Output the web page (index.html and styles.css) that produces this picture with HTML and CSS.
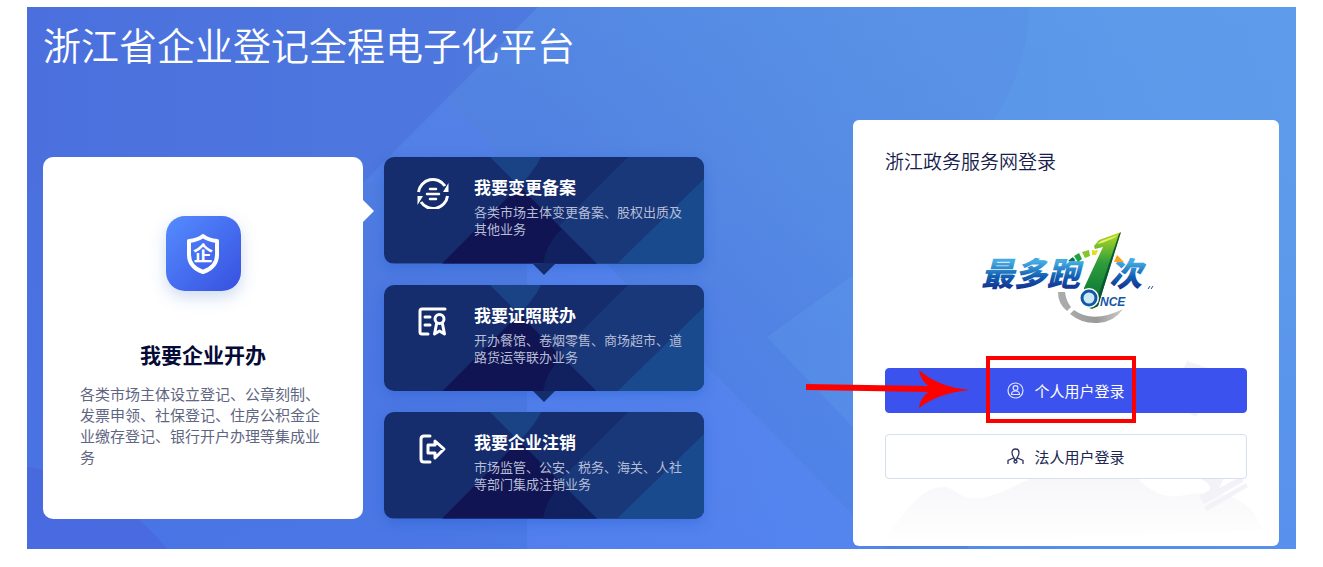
FILE: index.html
```html
<!DOCTYPE html>
<html lang="zh-CN">
<head>
  <meta charset="UTF-8">
  <meta name="viewport" content="width=device-width, initial-scale=1.0">
  <title>浙江省企业登记全程电子化平台</title>
  <link rel="stylesheet" href="styles.css">
</head>
<body>
  <svg class="defs" width="0" height="0" aria-hidden="true">
    <symbol id="card-pattern" viewBox="0 0 320 107" preserveAspectRatio="none">
      <rect width="320" height="107" fill="#152c6d"/>
      <path d="M106 0H157Q150 15 135 29Z" fill="#1a4385"/>
      <path d="M135 29L58 107H213Z" fill="#101452"/>
      <path d="M178 72L213 107H159Q162 87 178 72Z" fill="#11205f"/>
      <path d="M244 0H320V107H213L175 69Z" fill="#18387a"/>
      <path d="M320 22V107H233Z" fill="#1a4a8e"/>
    </symbol>
  </svg>

  <main class="hero">
    <svg class="hero-bg" viewBox="0 0 1269 542" preserveAspectRatio="none" aria-hidden="true">
      <defs>
        <linearGradient id="sky" x1="0" y1="0" x2="1" y2="0">
          <stop offset="0" stop-color="#4b70de"/>
          <stop offset="0.4" stop-color="#4e79de"/>
          <stop offset="0.65" stop-color="#5589e3"/>
          <stop offset="1" stop-color="#5d97e9"/>
        </linearGradient>
        <linearGradient id="depth" x1="0" y1="0" x2="0" y2="1">
          <stop offset="0.3" stop-color="#4678f0" stop-opacity="0"/>
          <stop offset="1" stop-color="#4678f0" stop-opacity="0.4"/>
        </linearGradient>
        <linearGradient id="beam" x1="0" y1="0" x2="0" y2="1">
          <stop offset="0" stop-color="#5c9cea" stop-opacity="0.4"/>
          <stop offset="0.6" stop-color="#5c9cea" stop-opacity="0"/>
        </linearGradient>
      </defs>
      <rect width="1269" height="542" fill="url(#sky)"/>
      <rect width="1269" height="542" fill="url(#depth)"/>
      <path d="M511 0H1269V542H330V182Z" fill="url(#beam)"/>
      <path d="M419 92L500 176H336Z" fill="#5580ee" opacity="0.4"/>
      <path d="M1002 0Q1002 60 965 115Q900 210 826 268L740 330L942 542H1269V0Z" fill="#65a7f0" opacity="0.22"/>
      <path d="M500 176L860 542H500Z" fill="#5c88f6" opacity="0.45"/>
      <path d="M0 460Q80 470 140 542H0Z" fill="#4a60da" opacity="0.45"/>
    </svg>

    <h1 class="hero-title">浙江省企业登记全程电子化平台</h1>

    <div class="hero-content">
      <section class="services">
        <a class="open-card" href="#">
          <span class="open-icon">
            <svg width="36" height="42" viewBox="0 0 36 42" aria-hidden="true">
              <path d="M18 3Q23 7 32 8V22Q32 34 18 39Q4 34 4 22V8Q13 7 18 3Z" fill="none" stroke="#fff" stroke-width="4" stroke-linejoin="round"/>
              <text class="shield-text" x="18" y="28" text-anchor="middle">企</text>
            </svg>
          </span>
          <h2>我要企业开办</h2>
          <p>各类市场主体设立登记、公章刻制、发票申领、社保登记、住房公积金企业缴存登记、银行开户办理等集成业务</p>
        </a>

        <div class="service-list">
          <a class="service" href="#">
            <svg class="service-bg" aria-hidden="true"><use href="#card-pattern"/></svg>
            <svg class="service-icon" viewBox="0 0 34 34" fill="none" stroke="#fff" stroke-width="3" aria-hidden="true">
              <path d="M2.500 17A14.500 14.500 0 0 1 29 11M31.500 21A14.500 14.500 0 0 1 5 27"/>
              <path d="M32.500 8V17H27ZM1.500 30V21H7Z" fill="#fff" stroke="none"/>
              <path d="M14 14H20M11 19H23M14 24H20" stroke-width="2.500" stroke-linecap="round"/>
            </svg>
            <div>
              <h3>我要变更备案</h3>
              <p>各类市场主体变更备案、股权出质及其他业务</p>
            </div>
          </a>
          <a class="service" href="#">
            <svg class="service-bg" aria-hidden="true"><use href="#card-pattern"/></svg>
            <svg class="service-icon" viewBox="0 0 34 34" fill="none" stroke="#fff" stroke-width="3" stroke-linecap="round" aria-hidden="true">
              <path d="M29 6H6Q4 6 4 8V29Q4 31 6 31H12M9 14H14M9 22H14"/>
              <circle cx="23.500" cy="16" r="4.500"/>
              <path d="M20.500 21L18.500 31L23.500 28L28.500 31L26.500 21" stroke-linejoin="round"/>
            </svg>
            <div>
              <h3>我要证照联办</h3>
              <p>开办餐馆、卷烟零售、商场超市、道路货运等联办业务</p>
            </div>
          </a>
          <a class="service" href="#">
            <svg class="service-bg" aria-hidden="true"><use href="#card-pattern"/></svg>
            <svg class="service-icon" viewBox="0 0 34 34" fill="none" stroke="#fff" stroke-width="3" stroke-linecap="round" stroke-linejoin="round" aria-hidden="true">
              <path d="M14 6H8Q5 6 5 9V29Q5 32 8 32H14"/>
              <path d="M12 15H19V11L28 19L19 28V23H12Z"/>
            </svg>
            <div>
              <h3>我要企业注销</h3>
              <p>市场监管、公安、税务、海关、人社等部门集成注销业务</p>
            </div>
          </a>
        </div>
      </section>

      <section class="login">
        <svg class="login-bg" viewBox="0 0 426 426" preserveAspectRatio="none" aria-hidden="true">
          <defs>
            <linearGradient id="hill" x1="0" y1="0" x2="0" y2="1">
              <stop offset="0" stop-color="#f6f6f9"/>
              <stop offset="1" stop-color="#fff"/>
            </linearGradient>
          </defs>
          <path d="M27 425C50 395 66 367 90 367C101 367 106 378 120 378C153 378 167 356 205 352H275C294 364 300 378 326 376C350 372 392 365 410 410Z" fill="url(#hill)"/>
          <g fill="#f3f2f9">
            <path d="M331 248L334 241L355 248V254H330Z"/>
            <path d="M335 292H347L343 296Q339 296 335 292Z"/>
            <path d="M346 358H371L366 368L385 358H390V362L351 384L346 376L357 370Q358 363 346 358Z"/>
            <path d="M351 387L393 363L395 367L354 391Z"/>
          </g>
        </svg>

        <h2>浙江政务服务网登录</h2>

        <svg class="logo" width="210" height="115" viewBox="0 0 210 115" role="img" aria-label="最多跑1次 ONCE">
          <defs>
            <linearGradient id="word" x1="0" y1="42" x2="0" y2="71" gradientUnits="userSpaceOnUse">
              <stop offset="0" stop-color="#45aae2"/>
              <stop offset="0.5" stop-color="#1260b2"/>
              <stop offset="1" stop-color="#14278a"/>
            </linearGradient>
            <linearGradient id="one" x1="0" y1="0" x2="0" y2="1">
              <stop offset="0" stop-color="#b9dc20"/>
              <stop offset="0.4" stop-color="#2f9d3c"/>
              <stop offset="1" stop-color="#006b36"/>
            </linearGradient>
            <linearGradient id="ring" x1="0" y1="0" x2="1" y2="0">
              <stop offset="0" stop-color="#aaa"/>
              <stop offset="0.5" stop-color="#999"/>
              <stop offset="1" stop-color="#ccc"/>
            </linearGradient>
          </defs>
          <path d="M97 72H104Q105 81 110 87L106 91Q97 84 97 72Z" fill="#aaa"/>
          <path d="M113 90Q132 104 162 89Q153 102 137 103Q121 104 109 94Z" fill="url(#ring)"/>
          <text class="logo-word" x="20" y="66" fill="url(#word)">最多跑</text>
          <text class="logo-word" x="148" y="66" fill="url(#word)">次</text>
          <path d="M107 41L112 37L114 41Z" fill="#087541"/>
          <path d="M113 36L118 33L121 39L117 42Z" fill="#1fa23c"/>
          <path d="M121 32L128 30L129 36L124 38Z" fill="#86c62c"/>
          <path d="M131 30H137L135 35H131Z" fill="#e3e020"/>
          <path d="M153 42L156 35L163 42Z" fill="#f7a61b"/>
          <path d="M133 26L138 20L160 12L137 86L131 89L123 86V68L142 27L134 29Z" fill="url(#one)" stroke="#fff" stroke-width="3" paint-order="stroke"/>
          <path d="M158 14L160 12L137 86L133 88Z" fill="#075832"/>
          <path d="M136 24L140 21L157 15L153 18L141 23Z" fill="#e9ef70"/>
          <circle cx="128" cy="78" r="10" fill="#fff"/>
          <circle cx="128" cy="78" r="7" fill="#cbe8f5" stroke="#1457a6" stroke-width="3"/>
          <text class="logo-once" x="139" y="86">NCE</text>
          <path d="M187 69L189 66M190 69L192 66" stroke="#1457a6"/>
        </svg>

        <div class="login-actions">
          <button class="btn btn-primary" type="button">
            <svg width="17" height="17" viewBox="0 0 17 17" fill="none" stroke="#dfe4ff" stroke-width="1.200" aria-hidden="true">
              <circle cx="8.500" cy="8.500" r="7.500"/>
              <circle cx="8.500" cy="6" r="2.400"/>
              <path d="M4.500 12.500Q4.500 9 8.500 9T12.500 12.500Z"/>
            </svg>
            个人用户登录
          </button>
          <button class="btn" type="button">
            <svg width="17" height="17" viewBox="0 0 17 17" fill="none" stroke="#2b3160" stroke-width="1.300" aria-hidden="true">
              <path d="M6.500 9Q5 7 5 4.500Q5 1 8.500 1T12 4.500Q12 7 10.500 9M6.500 9Q7 11 8.500 12Q10 11 10.500 9M6.500 10L1 12.500V16M10.500 10L16 12.500V16"/>
              <circle cx="8.500" cy="13.500" r="1.500"/>
            </svg>
            法人用户登录
          </button>
          <svg class="marker" width="330" height="67" viewBox="0 0 330 67" aria-hidden="true">
            <rect x="182" y="2" width="146" height="63" fill="none" stroke="#f00" stroke-width="4"/>
            <path d="M0 28L122 30Q114 23 113 14Q132 31 164 34Q132 37 113 52Q114 43 122 36L0 34Z" fill="#f00"/>
          </svg>
        </div>
      </section>
    </div>
  </main>
</body>
</html>
```

FILE: styles.css
```css
* {
  box-sizing: border-box;
}

body {
  margin: 0;
  padding: 7px 27px 18px;
  background-color: #fff;
  font-family: "Noto Sans CJK SC", sans-serif;
}

h1, h2, h3, p {
  margin: 0;
}

a {
  text-decoration: none;
}

.defs {
  position: absolute;
}

.hero {
  position: relative;
  padding: 9px 17px 3px 16px;
  overflow: hidden;
  background-color: #4c76dd;
}

.hero-bg {
  position: absolute;
  top: 0;
  left: 0;
  width: 100%;
  height: 100%;
}

.hero-title {
  position: relative;
  margin-bottom: 48px;
  color: #fff;
  font-size: 38px;
  font-weight: 350;
  line-height: 56px;
}

.hero-content {
  position: relative;
  display: flex;
  justify-content: space-between;
  align-items: flex-start;
  gap: 24px;
}

.services {
  display: grid;
  flex: 0 1 661px;
  grid-template-columns: 1fr 1fr;
  gap: 21px;
  margin-top: 37px;
}

.open-card {
  position: relative;
  padding: 59px 37px 52px;
  border-radius: 10px;
  background-color: #fff;
}

.open-card::after {
  content: "";
  position: absolute;
  top: 43px;
  left: 100%;
  border: 11px solid transparent;
  border-left-color: #fff;
  border-right-width: 0;
}

.open-icon {
  display: flex;
  align-items: center;
  justify-content: center;
  width: 75px;
  height: 75px;
  margin: 0 auto 49px;
  border-radius: 19px;
  background: linear-gradient(135deg, #558cff, #3750df);
  box-shadow: 0 6px 16px rgba(60, 110, 200, 0.25);
}

.shield-text {
  fill: #fff;
  font-size: 20px;
  font-weight: 700;
}

.open-card h2 {
  margin-bottom: 15px;
  color: #050b36;
  font-size: 21px;
  font-weight: 700;
  line-height: 28px;
  text-align: center;
}

.open-card p {
  color: #5f6682;
  font-size: 15px;
  line-height: 21px;
}

.service-list {
  display: flex;
  flex-direction: column;
  gap: 21px;
}

.service {
  position: relative;
  display: flex;
  flex: 1;
  gap: 24px;
  padding: 18px 16px 16px 32px;
  border-radius: 10px;
  box-shadow: 0 4px 12px rgba(25, 90, 200, 0.35);
}

.service:not(:last-child)::after {
  content: "";
  position: absolute;
  top: 100%;
  left: 50%;
  margin-left: -11px;
  border: 11px solid transparent;
  border-top-color: #152c6d;
  border-bottom-width: 0;
}

.service-bg {
  position: absolute;
  top: 0;
  left: 0;
  width: 100%;
  height: 100%;
  border-radius: 10px;
}

.service-icon {
  position: relative;
  flex: none;
  width: 34px;
  height: 34px;
}

.service div {
  position: relative;
}

.service h3 {
  margin-bottom: 4px;
  color: #fff;
  font-size: 17px;
  font-weight: 700;
  line-height: 24px;
}

.service p {
  color: #b6bdd6;
  font-size: 13px;
  line-height: 17px;
}

.login {
  position: relative;
  flex: none;
  width: 426px;
  padding: 29px 32px 67px;
  border-radius: 6px;
  background-color: #fff;
}

.login-bg {
  position: absolute;
  top: 0;
  left: 0;
  width: 100%;
  height: 100%;
}

.login h2 {
  position: relative;
  color: #161d4d;
  font-size: 19px;
  font-weight: 350;
  line-height: 24px;
}

.logo {
  position: relative;
  display: block;
  margin: 47px auto 33px;
}

.logo-word {
  font-size: 33px;
  font-style: italic;
  font-weight: 900;
}

.logo-once {
  fill: #1457a6;
  font-family: "Liberation Sans", sans-serif;
  font-size: 12px;
  font-style: italic;
  font-weight: 700;
}

.login-actions {
  position: relative;
  display: flex;
  flex-direction: column;
  gap: 21px;
}

.btn {
  display: flex;
  align-items: center;
  justify-content: center;
  gap: 10px;
  height: 45px;
  padding: 0;
  border: 1px solid #d5dfef;
  border-radius: 4px;
  background-color: #fff;
  color: #20264f;
  font-family: inherit;
  font-size: 15px;
  cursor: pointer;
}

.btn-primary {
  border-color: #3b52ee;
  background-color: #3b52ee;
  color: #fff;
}

.marker {
  position: absolute;
  top: -12px;
  left: -79px;
  pointer-events: none;
}
```
